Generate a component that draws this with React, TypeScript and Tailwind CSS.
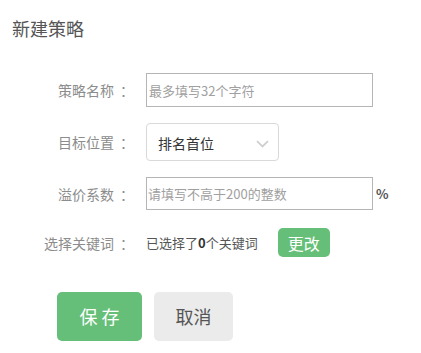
import React from "react";

function Label({ text }: { text: string }) {
  return (
    <div className="w-[134px] shrink-0 text-right text-[14px] text-[#8c8c8c] leading-none">
      <span>{text}</span>
      <span className="ml-[6px]">：</span>
    </div>
  );
}

export default function App() {
  return (
    <div
      className="w-[421px] h-[353px] bg-white overflow-hidden"
      style={{ fontFamily: '"Noto Sans CJK SC", "Noto Sans", sans-serif' }}
    >
      <div className="pt-[15px] pl-[12px] text-[18px] leading-[26px] text-[#555]">新建策略</div>

      <div className="mt-[32px] flex flex-col">
        {/* 策略名称 */}
        <div className="flex items-center gap-[12px]">
          <Label text="策略名称" />
          <input
            className="w-[227px] h-[34px] border border-[#b5b5b5] pl-[2px] text-[13px] text-[#333] placeholder:text-[#a0a0a0] outline-none"
            placeholder="最多填写32个字符"
          />
        </div>

        {/* 目标位置 */}
        <div className="mt-[16px] flex items-center gap-[12px]">
          <Label text="目标位置" />
          <div className="w-[133px] h-[38px] border border-[#d9d9d9] rounded-[4px] flex items-center justify-between pl-[11px] pr-[9px]">
            <span className="text-[14px] text-[#333] pt-[2px]">排名首位</span>
            <svg width="13" height="8" viewBox="0 0 13 8" className="mt-[3px]">
              <path d="M1 1.2 L6.5 6.5 L12 1.2" fill="none" stroke="#cfcfcf" strokeWidth="1.8" />
            </svg>
          </div>
        </div>

        {/* 溢价系数 */}
        <div className="mt-[16px] flex items-center gap-[12px]">
          <Label text="溢价系数" />
          <div className="flex items-center">
            <input
              className="w-[227px] h-[33px] border border-[#b5b5b5] pl-[1px] text-[13px] text-[#333] placeholder:text-[#a0a0a0] outline-none"
              placeholder="请填写不高于200的整数"
            />
            <span className="ml-[3px] text-[13px] font-bold text-[#555]">%</span>
          </div>
        </div>

        {/* 选择关键词 */}
        <div className="mt-[18px] flex items-center gap-[12px]">
          <Label text="选择关键词" />
          <span className="text-[13px] text-[#555]">
            已选择了<b className="text-[#333]">0</b>个关键词
          </span>
          <button className="ml-[8px] w-[52px] h-[29px] rounded-[5px] bg-[#66bf78] text-white text-[16px] leading-none">
            更改
          </button>
        </div>

        {/* 按钮 */}
        <div className="mt-[35px] pl-[57px] flex gap-[12px]">
          <button className="w-[85px] h-[49px] rounded-[5px] bg-[#66bf78] text-white text-[18px]">
            保 存
          </button>
          <button className="w-[79px] h-[49px] rounded-[5px] bg-[#ebebeb] text-[#555] text-[18px]">
            取消
          </button>
        </div>
      </div>
    </div>
  );
}
